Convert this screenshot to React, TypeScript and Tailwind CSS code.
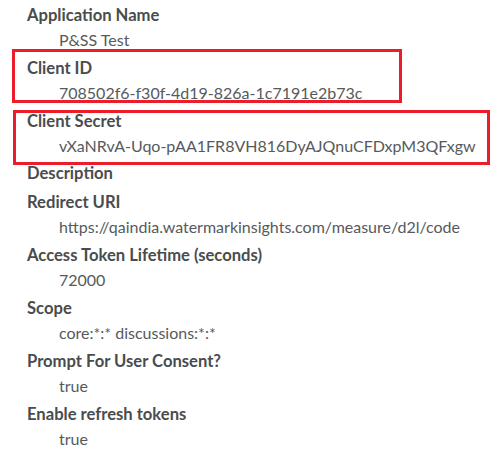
import React from "react";

const fields: { label: string; value?: string }[] = [
  { label: "Application Name", value: "P&SS Test" },
  { label: "Client ID", value: "708502f6-f30f-4d19-826a-1c7191e2b73c" },
  { label: "Client Secret", value: "vXaNRvA-Uqo-pAA1FR8VH816DyAJQnuCFDxpM3QFxgw" },
  { label: "Description" },
  { label: "Redirect URI", value: "https://qaindia.watermarkinsights.com/measure/d2l/code" },
  { label: "Access Token Lifetime (seconds)", value: "72000" },
  { label: "Scope", value: "core:*:* discussions:*:*" },
  { label: "Prompt For User Consent?", value: "true" },
  { label: "Enable refresh tokens", value: "true" },
];

const App = () => {
  return (
    <main
      className="relative w-[503px] h-[475px] bg-white overflow-hidden"
      style={{ fontFamily: "Lato, 'Open Sans', sans-serif" }}
    >
      <dl className="flex flex-col gap-[5px] pt-[3px] pl-[27px]">
        {fields.map((f) => (
          <div key={f.label}>
            <dt
              className={
                f.value
                  ? "text-[16.6px] font-bold leading-[25px] text-[#494c4e]"
                  : "text-[16.6px] font-bold leading-[23px] text-[#494c4e]"
              }
            >
              {f.label}
            </dt>
            {f.value && (
              <dd className="pl-[32px] text-[16px] leading-[23px] text-[#565a5c]">
                {f.value}
              </dd>
            )}
          </div>
        ))}
      </dl>

      {/* highlight boxes */}
      <div className="absolute left-[12px] top-[49px] w-[390px] h-[54px] border-[3px] border-[#ec1c2a]" />
      <div className="absolute left-[13px] top-[110px] w-[477px] h-[55px] border-[3px] border-[#ec1c2a]" />
    </main>
  );
};

export default App;
